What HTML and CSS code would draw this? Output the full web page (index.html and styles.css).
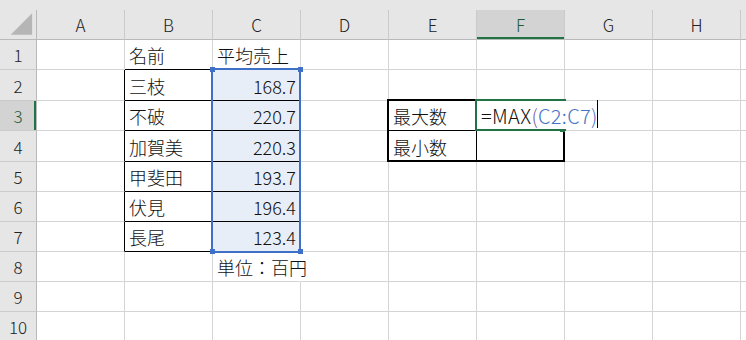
FILE: index.html
```html
<html>
<head>
<meta charset="utf-8">
<link rel="stylesheet" href="styles.css">
</head>

<body>
<div class="band"></div>
<div class="sheet">
  <!-- column headers -->
  <div class="hd corner">
    <svg width="37" height="30" viewBox="0 0 37 30"><polygon points="11,25 33,25 33,3" fill="#b5b5b5"/></svg>
  </div>
  <div class="hd">A</div>
  <div class="hd">B</div>
  <div class="hd">C</div>
  <div class="hd">D</div>
  <div class="hd">E</div>
  <div class="hd active">F</div>
  <div class="hd">G</div>
  <div class="hd">H</div>
  <div class="hd"></div>

  <!-- row 1 -->
  <div class="rh">1</div>
  <div class="c"></div>
  <div class="c bb">名前</div>
  <div class="c">平均売上</div>
  <div class="c"></div><div class="c"></div><div class="c"></div><div class="c"></div><div class="c"></div><div class="c"></div>

  <!-- row 2 -->
  <div class="rh">2</div>
  <div class="c br"></div>
  <div class="c br bb">三枝</div>
  <div class="c num sel bb">168.7</div>
  <div class="c"></div><div class="c"></div><div class="c"></div><div class="c"></div><div class="c"></div><div class="c"></div>

  <!-- row 3 -->
  <div class="rh active">3</div>
  <div class="c br"></div>
  <div class="c br bb">不破</div>
  <div class="c num sel bb">220.7</div>
  <div class="c"></div>
  <div class="c br bb">最大数</div>
  <div class="c bb"></div>
  <div class="c"></div><div class="c"></div><div class="c"></div>

  <!-- row 4 -->
  <div class="rh">4</div>
  <div class="c br"></div>
  <div class="c br bb">加賀美</div>
  <div class="c num sel bb">220.3</div>
  <div class="c"></div>
  <div class="c br">最小数</div>
  <div class="c"></div>
  <div class="c"></div><div class="c"></div><div class="c"></div>

  <!-- row 5 -->
  <div class="rh">5</div>
  <div class="c br"></div>
  <div class="c br bb">甲斐田</div>
  <div class="c num sel bb">193.7</div>
  <div class="c"></div><div class="c"></div><div class="c"></div><div class="c"></div><div class="c"></div><div class="c"></div>

  <!-- row 6 -->
  <div class="rh">6</div>
  <div class="c br"></div>
  <div class="c br bb">伏見</div>
  <div class="c num sel bb">196.4</div>
  <div class="c"></div><div class="c"></div><div class="c"></div><div class="c"></div><div class="c"></div><div class="c"></div>

  <!-- row 7 -->
  <div class="rh">7</div>
  <div class="c br"></div>
  <div class="c br bb">長尾</div>
  <div class="c num sel bb">123.4</div>
  <div class="c"></div><div class="c"></div><div class="c"></div><div class="c"></div><div class="c"></div><div class="c"></div>

  <!-- row 8 -->
  <div class="rh">8</div>
  <div class="c"></div>
  <div class="c"></div>
  <div class="c spill">単位：百円</div>
  <div class="c"></div><div class="c"></div><div class="c"></div><div class="c"></div><div class="c"></div><div class="c"></div>

  <!-- row 9 -->
  <div class="rh">9</div>
  <div class="c"></div><div class="c"></div><div class="c"></div><div class="c"></div><div class="c"></div><div class="c"></div><div class="c"></div><div class="c"></div><div class="c"></div>

  <!-- row 10 -->
  <div class="rh">10</div>
  <div class="c"></div><div class="c"></div><div class="c"></div><div class="c"></div><div class="c"></div><div class="c"></div><div class="c"></div><div class="c"></div><div class="c"></div>

  <!-- thick box around E3:F4 -->
  <div class="thick-box"></div>

  <!-- referenced range C2:C7 -->
  <div class="ref-range">
    <span class="knob tl"></span>
    <span class="knob tr"></span>
    <span class="knob bl"></span>
    <span class="knob br-k"></span>
  </div>

  <!-- active cell F3 in edit mode -->
  <div class="active-cell"><span class="fill-knob"></span></div>
  <div class="editor"><span>=MAX</span><span class="paren">(</span><span class="ref">C2:C7</span><span class="ref">)</span><span class="caret"></span></div>
</div>
</body>
</html>
```

FILE: styles.css
```css
body{
  margin: 0;
  background: #fff;
  font-family: "Noto Sans CJK JP", "Noto Sans", sans-serif;
  font-weight: 300;
  color: #111;
  overflow: hidden;
}

.band{
  height: 10px;
  background: #e6e6e6;
}

.sheet{
  position: relative;
  display: grid;
  grid-template-columns: 37px repeat(8, 88px) 1fr;
  grid-template-rows: 30px 30px 31px 30px 31px 30px 30px 30px 30px 30px 30px;
  width: 746px;
}

.sheet > div{
  box-sizing: border-box;
}

.hd{
  background: #e6e6e6;
  border-right: 1px solid #cbcbcb;
  border-bottom: 1px solid #b9b9b9;
  display: flex;
  align-items: center;
  justify-content: center;
  font-size: 17px;
  color: #222;
}

.hd.corner{
  border-right-color: #b9b9b9;
  justify-content: flex-start;
}

.hd.corner svg{
  display: block;
}

.hd.active{
  background: #d3d3d3;
  color: #1d5a36;
  box-shadow: inset 0 -2px 0 #217346;
}

.rh{
  background: #e6e6e6;
  border-right: 1px solid #b9b9b9;
  border-bottom: 1px solid #cbcbcb;
  display: flex;
  align-items: center;
  justify-content: center;
  font-size: 17px;
  color: #222;
}

.rh.active{
  background: #d3d3d3;
  color: #1d5a36;
  box-shadow: inset -2px 0 0 #217346;
}

.c{
  border-right: 1px solid #d4d4d4;
  border-bottom: 1px solid #d4d4d4;
  display: flex;
  align-items: center;
  padding: 1px 4px 0 4px;
  font-size: 18px;
  white-space: nowrap;
}

.c.br{ border-right-color: #000; }
.c.bb{ border-bottom-color: #000; }

.c.num{
  justify-content: flex-end;
}

.c.sel{
  background: #e8eef8;
}

.c.spill{
  overflow: visible;
  border-right-color: transparent;
  position: relative;
  z-index: 1;
}

/* overlays */
.thick-box{
  position: absolute;
  left: 387px;
  top: 89px;
  width: 178px;
  height: 63px;
  border: 2px solid #000;
}

.ref-range{
  position: absolute;
  left: 211px;
  top: 58px;
  width: 90px;
  height: 185px;
  border: 2px solid #3f70c7;
}

.knob{
  position: absolute;
  width: 5px;
  height: 5px;
  background: #3f70c7;
}

.knob.tl{ left: -3px; top: -3px; }
.knob.tr{ right: -4px; top: -3px; }
.knob.bl{ left: -3px; bottom: -3px; }
.knob.br-k{ right: -4px; bottom: -3px; }

.active-cell{
  position: absolute;
  left: 475px;
  top: 89px;
  width: 91px;
  height: 32px;
  border: 2px solid #217346;
}

.fill-knob{
  position: absolute;
  right: -1px;
  bottom: -3px;
  width: 5px;
  height: 4px;
  background: #217346;
}

.editor{
  position: absolute;
  left: 477px;
  top: 91px;
  width: 121px;
  height: 28px;
  background: #fff;
  display: flex;
  align-items: center;
  padding-left: 4px;
  font-size: 20px;
  letter-spacing: 0.3px;
  white-space: nowrap;
}

.editor .paren{ color: #7b5a9c; }
.editor .ref{ color: #4472c4; }

.caret{
  position: absolute;
  right: 0;
  top: -1px;
  width: 1px;
  height: 28px;
  background: #000;
}
```
